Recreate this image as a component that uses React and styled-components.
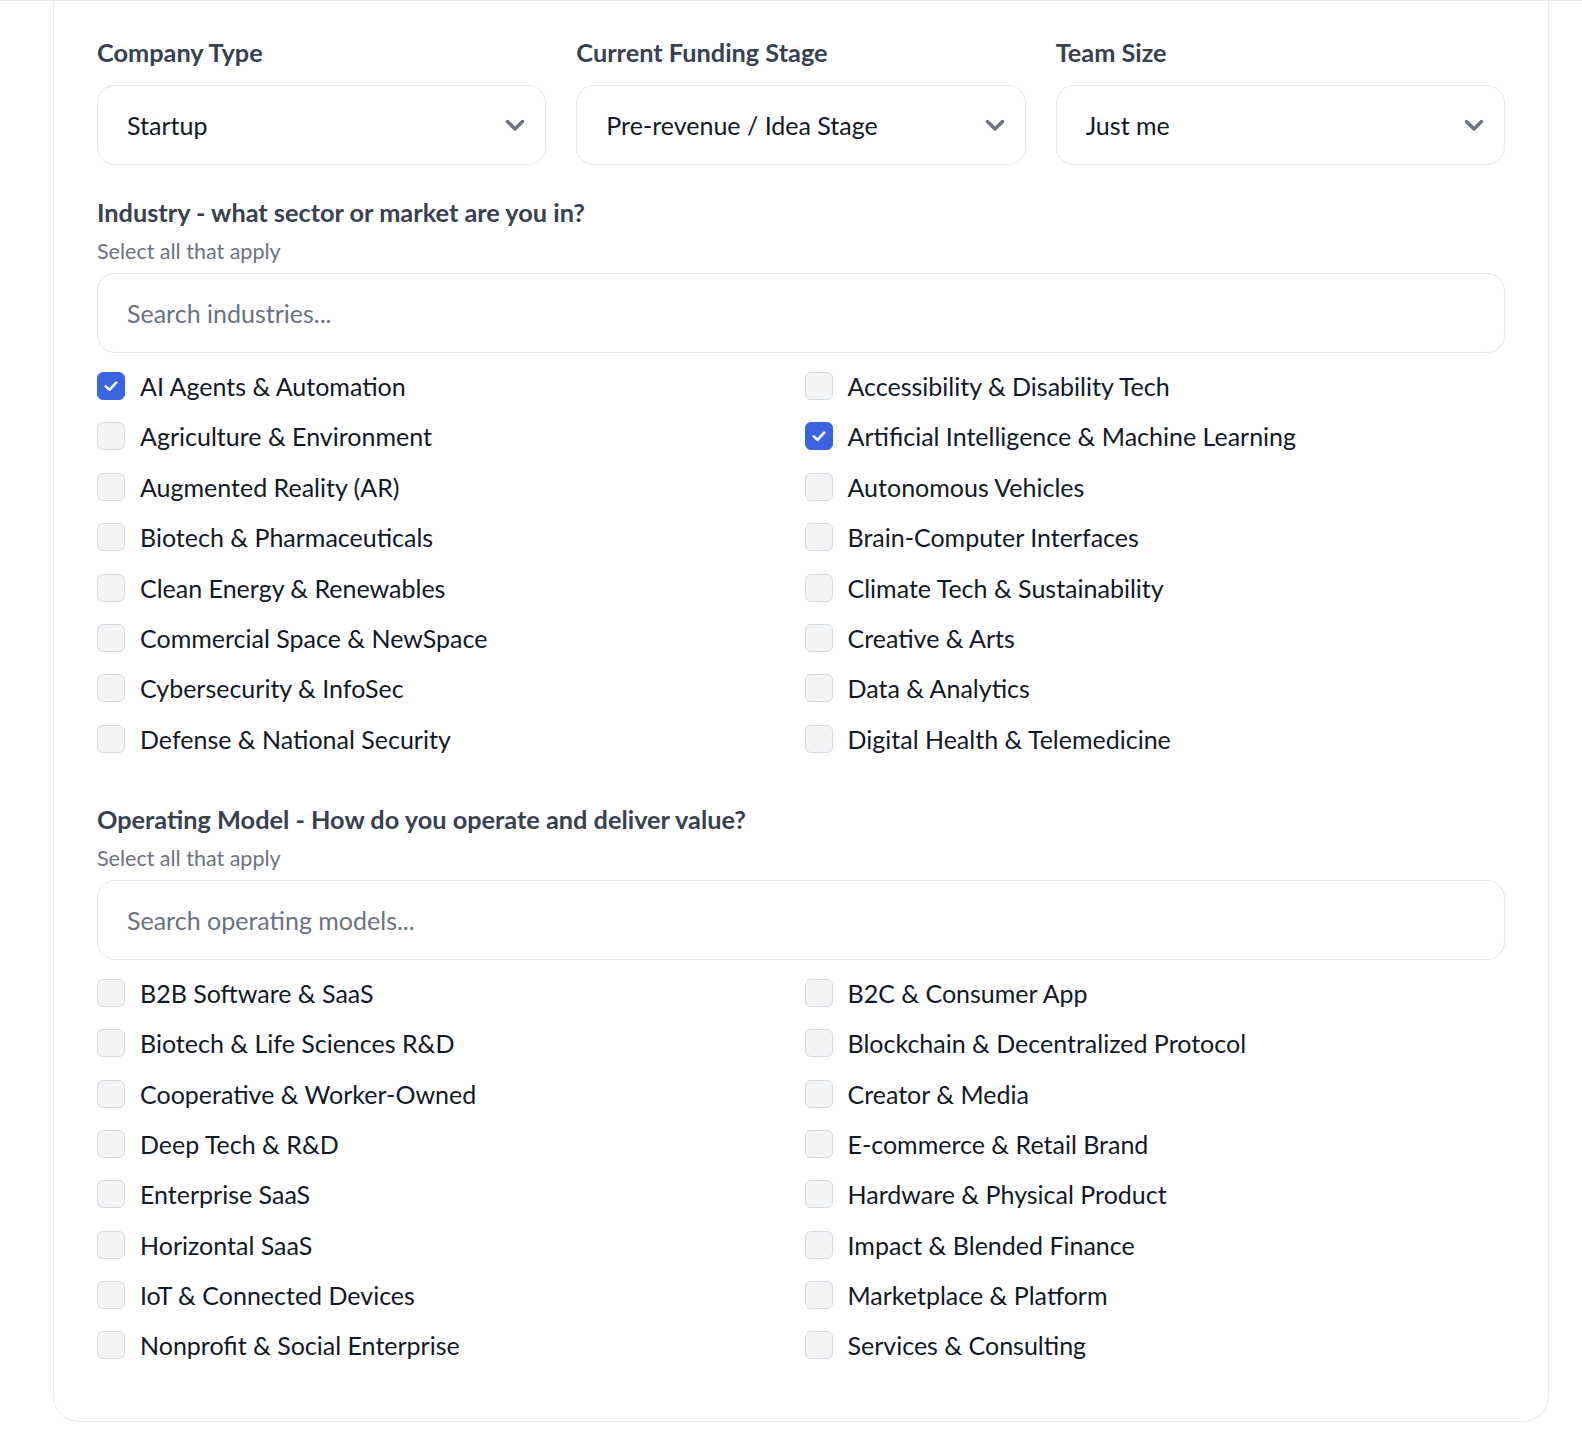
import React, { useState } from 'react';
import styled, { createGlobalStyle } from 'styled-components';

const GlobalStyle = createGlobalStyle`
	html, body {
		margin: 0;
		padding: 0;
		background: #ffffff;
		font-family: Lato, "Noto Sans", "Liberation Sans", sans-serif;
	}
	* {
		box-sizing: border-box;
	}
`;

const TopEdge = styled.div`
	height: 1px;
	background: #e6e8ec;
`;

const Card = styled.div`
	width: 1496px;
	margin-left: 53px;
	padding: 33px 43px 43px;
	border: 1px solid #e4ecf8;
	border-top: none;
	border-radius: 0 0 26px 26px;
	background: #ffffff;
	display: flex;
	flex-direction: column;
	gap: 29px;
`;

const SelectRow = styled.div`
	display: grid;
	grid-template-columns: repeat(3, 1fr);
	column-gap: 30px;
`;

const Field = styled.div`
	display: flex;
	flex-direction: column;
`;

const Label = styled.label`
	font-size: 25.3px;
	line-height: 36px;
	font-weight: 700;
	color: #374151;
	margin-bottom: ${(p) => p.$gap || 0}px;
`;

const Hint = styled.div`
	font-size: 21.5px;
	line-height: 28px;
	color: #6b7280;
	margin-top: 7px;
	margin-bottom: 8px;
`;

const SelectWrap = styled.div`
	position: relative;
`;

const SelectBox = styled.select`
	appearance: none;
	width: 100%;
	height: 80px;
	padding: 0 60px 0 29px;
	border: 1px solid #e5e7eb;
	border-radius: 18px;
	background: #ffffff;
	font-family: inherit;
	font-size: 25px;
	color: #111827;
	outline: none;
`;

const Chevron = styled.svg`
	position: absolute;
	right: 21px;
	top: 34px;
	pointer-events: none;
`;

const SearchInput = styled.input`
	width: 100%;
	height: 80px;
	padding: 0 29px;
	border: 1px solid #e5e7eb;
	border-radius: 18px;
	font-family: inherit;
	font-size: 25px;
	color: #111827;
	outline: none;
	&::placeholder {
		color: #6b7280;
	}
`;

const Options = styled.div`
	display: grid;
	grid-template-columns: 1fr 1fr;
	column-gap: 7px;
	row-gap: 14.4px;
	margin-top: 15px;
	padding-bottom: 15px;
`;

const Option = styled.label`
	display: flex;
	align-items: center;
	gap: 15px;
	height: 36px;
	font-size: 25px;
	color: #111827;
	cursor: pointer;
`;

const Box = styled.span`
	width: 28px;
	height: 28px;
	flex-shrink: 0;
	border-radius: 6px;
	border: 1px solid ${(p) => (p.$on ? '#3a64e0' : '#d6d9de')};
	background: ${(p) => (p.$on ? '#3a64e0' : '#f3f4f6')};
	display: flex;
	align-items: center;
	justify-content: center;
`;

const industries = [
	'AI Agents & Automation',
	'Accessibility & Disability Tech',
	'Agriculture & Environment',
	'Artificial Intelligence & Machine Learning',
	'Augmented Reality (AR)',
	'Autonomous Vehicles',
	'Biotech & Pharmaceuticals',
	'Brain-Computer Interfaces',
	'Clean Energy & Renewables',
	'Climate Tech & Sustainability',
	'Commercial Space & NewSpace',
	'Creative & Arts',
	'Cybersecurity & InfoSec',
	'Data & Analytics',
	'Defense & National Security',
	'Digital Health & Telemedicine',
];

const models = [
	'B2B Software & SaaS',
	'B2C & Consumer App',
	'Biotech & Life Sciences R&D',
	'Blockchain & Decentralized Protocol',
	'Cooperative & Worker-Owned',
	'Creator & Media',
	'Deep Tech & R&D',
	'E-commerce & Retail Brand',
	'Enterprise SaaS',
	'Hardware & Physical Product',
	'Horizontal SaaS',
	'Impact & Blended Finance',
	'IoT & Connected Devices',
	'Marketplace & Platform',
	'Nonprofit & Social Enterprise',
	'Services & Consulting',
];

const Dropdown = ({ label, value, options }) => (
	<Field>
		<Label $gap={15}>{label}</Label>
		<SelectWrap>
			<SelectBox defaultValue={value}>
				{options.map((o) => (
					<option key={o}>{o}</option>
				))}
			</SelectBox>
			<Chevron width="20" height="13" viewBox="0 0 20 13">
				<polyline
					points="2.5 2.5 10 10 17.5 2.5"
					fill="none"
					stroke="#6b7280"
					strokeWidth="3.4"
					strokeLinecap="round"
					strokeLinejoin="round"
				/>
			</Chevron>
		</SelectWrap>
	</Field>
);

const CheckList = ({ title, placeholder, items, initial }) => {
	const [picked, setPicked] = useState(initial);

	const toggle = (item) => {
		setPicked((prev) =>
			prev.includes(item) ? prev.filter((i) => i !== item) : [...prev, item]
		);
	};

	return (
		<Field>
			<Label>{title}</Label>
			<Hint>Select all that apply</Hint>
			<SearchInput placeholder={placeholder} />
			<Options>
				{items.map((item) => {
					const on = picked.includes(item);
					return (
						<Option key={item} onClick={() => toggle(item)}>
							<Box $on={on}>
								{on && (
									<svg width="18" height="18" viewBox="0 0 24 24">
										<polyline
											points="5 12.5 10 17 19 7.5"
											fill="none"
											stroke="#ffffff"
											strokeWidth="3.4"
											strokeLinecap="round"
											strokeLinejoin="round"
										/>
									</svg>
								)}
							</Box>
							{item}
						</Option>
					);
				})}
			</Options>
		</Field>
	);
};

const App = () => {
	return (
		<>
			<GlobalStyle />
			<TopEdge />
			<Card>
				<SelectRow>
					<Dropdown
						label="Company Type"
						value="Startup"
						options={['Startup', 'Small Business', 'Nonprofit']}
					/>
					<Dropdown
						label="Current Funding Stage"
						value="Pre-revenue / Idea Stage"
						options={['Pre-revenue / Idea Stage', 'Pre-seed', 'Seed', 'Series A']}
					/>
					<Dropdown
						label="Team Size"
						value="Just me"
						options={['Just me', '2-5', '6-20', '21+']}
					/>
				</SelectRow>
				<CheckList
					title="Industry - what sector or market are you in?"
					placeholder="Search industries..."
					items={industries}
					initial={['AI Agents & Automation', 'Artificial Intelligence & Machine Learning']}
				/>
				<CheckList
					title="Operating Model - How do you operate and deliver value?"
					placeholder="Search operating models..."
					items={models}
					initial={[]}
				/>
			</Card>
		</>
	);
};

export default App;
